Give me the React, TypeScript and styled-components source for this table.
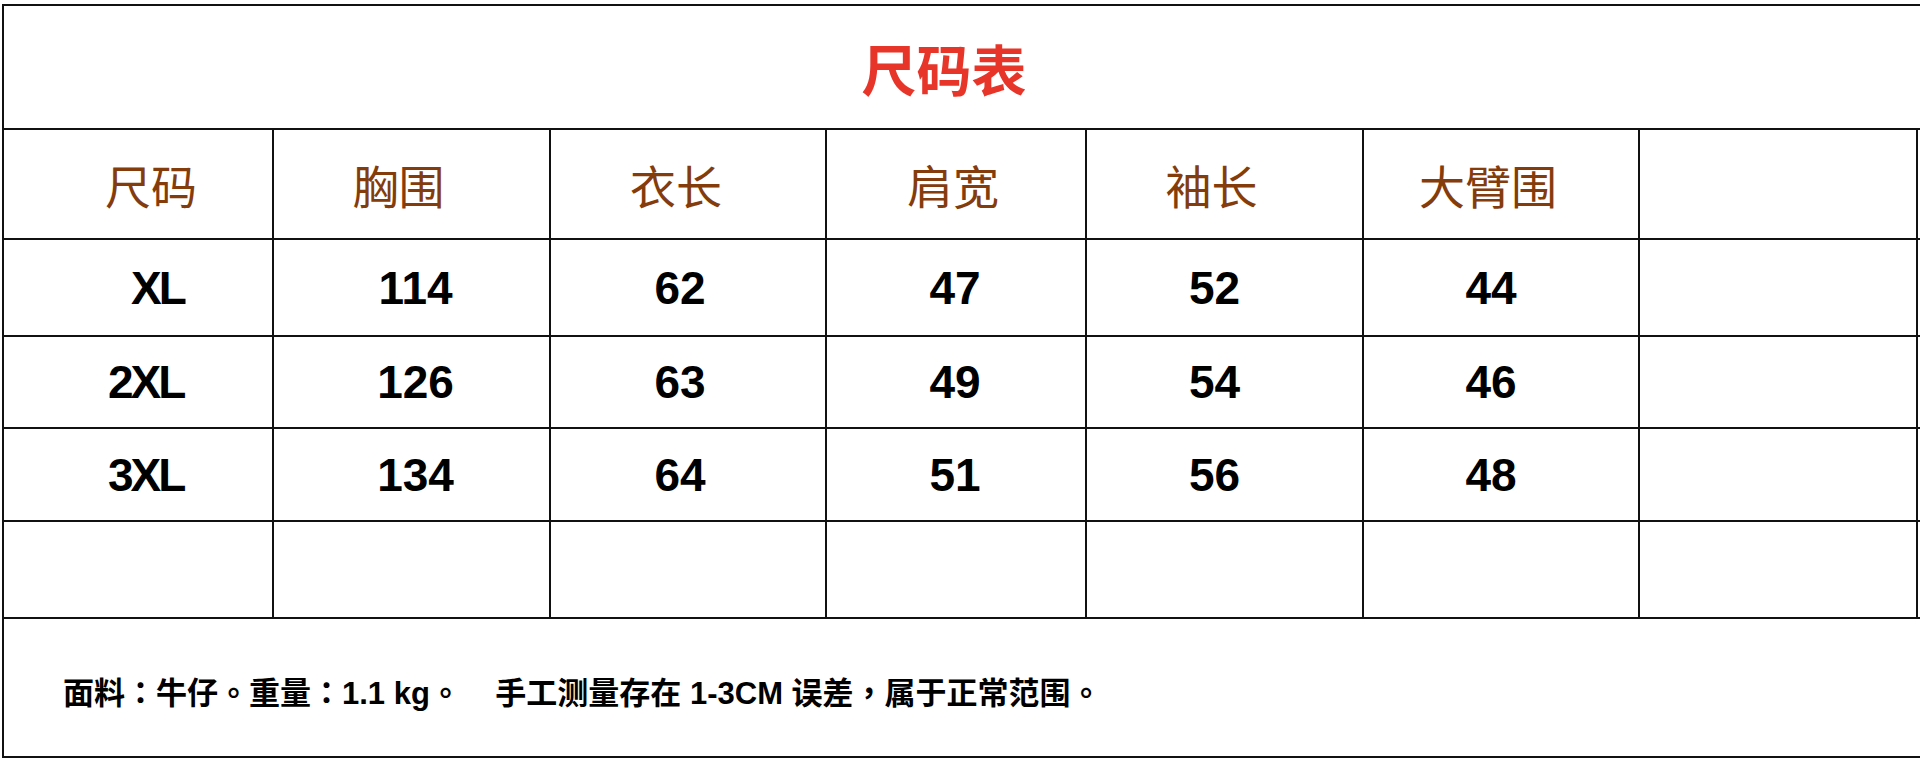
import styled, { createGlobalStyle } from 'styled-components';

const GlobalStyle = createGlobalStyle`
  html, body {
    margin: 0;
    padding: 0;
    background: #fff;
    overflow: hidden;
  }
  body {
    font-family: 'Liberation Sans', 'Noto Sans CJK SC', sans-serif;
  }
`;

const Sheet = styled.div`
  margin: 4px 0 0 2px;
  width: 1990px;
  display: grid;
  grid-template-columns: 270px 277px 276px 260px 277px 276px 278px 70px;
  grid-template-rows: 124px 110px 97px 92px 93px 97px 139px;
  border-top: 2px solid #111;
  border-left: 2px solid #111;
`;

const Cell = styled.div<{ $align?: 'left' | 'center'; $pl?: number; $pr?: number }>`
  box-sizing: border-box;
  border-right: 2px solid #111;
  border-bottom: 2px solid #111;
  display: flex;
  align-items: center;
  justify-content: ${(p) => (p.$align === 'left' ? 'flex-start' : 'center')};
  padding-left: ${(p) => p.$pl ?? 0}px;
  padding-right: ${(p) => p.$pr ?? 0}px;
  white-space: pre;
`;

const TitleCell = styled(Cell)`
  grid-column: 1 / -1;
  border-right: none;
  padding-right: 104px;
  font-family: 'Noto Sans CJK SC', sans-serif;
  font-weight: 700;
  font-size: 55px;
  color: #e8352a;
`;

const HeadCell = styled(Cell)`
  font-family: 'Noto Sans CJK SC', sans-serif;
  font-weight: 400;
  font-size: 46px;
  color: #843c0c;
`;

const DataCell = styled(Cell)`
  font-family: 'Liberation Sans', sans-serif;
  font-weight: 700;
  font-size: 46px;
  color: #000;
`;

const SizeCell = styled(DataCell)`
  letter-spacing: -3px;
`;

const NoteCell = styled(Cell)`
  grid-column: 1 / -1;
  border-right: none;
  justify-content: flex-start;
  padding: 6px 0 0 59px;
  font-family: 'Liberation Sans', 'Noto Sans CJK TC', sans-serif;
  font-weight: 700;
  font-size: 31px;
  color: #000;
`;

// shift of each column's text from the cell centre (negative = to the left)
const headShift = [0, -13, -12, -3, -13, -13, 0, 0];
const dataShift = [0, 4, -8, -1, -10, -10, 0, 0];

const headers = ['尺码', '胸围', '衣长', '肩宽', '袖长', '大臂围', '', ''];

const rows = [
  { size: 'XL', pl: 127, vals: ['114', '62', '47', '52', '44', '', ''] },
  { size: '2XL', pl: 104, vals: ['126', '63', '49', '54', '46', '', ''] },
  { size: '3XL', pl: 104, vals: ['134', '64', '51', '56', '48', '', ''] },
  { size: '', pl: 104, vals: ['', '', '', '', '', '', ''] },
];

const pad = (s: number) => (s < 0 ? { $pr: -2 * s } : { $pl: 2 * s });

const App = () => (
  <>
    <GlobalStyle />
    <Sheet>
      <TitleCell>尺码表</TitleCell>
      {headers.map((h, i) =>
        i === 0 ? (
          <HeadCell key={`h${i}`} $align="left" $pl={101}>
            {h}
          </HeadCell>
        ) : (
          <HeadCell key={`h${i}`} {...pad(headShift[i])}>
            {h}
          </HeadCell>
        ),
      )}
      {rows.map((r, ri) => [
        <SizeCell key={`${ri}-s`} $align="left" $pl={r.pl}>
          {r.size}
        </SizeCell>,
        ...r.vals.map((v, ci) => (
          <DataCell key={`${ri}-${ci}`} {...pad(dataShift[ci + 1])}>
            {v}
          </DataCell>
        )),
      ])}
      <NoteCell>面料：牛仔。重量：1.1 kg。    手工测量存在 1-3CM 误差，属于正常范围。</NoteCell>
    </Sheet>
  </>
);

export default App;
